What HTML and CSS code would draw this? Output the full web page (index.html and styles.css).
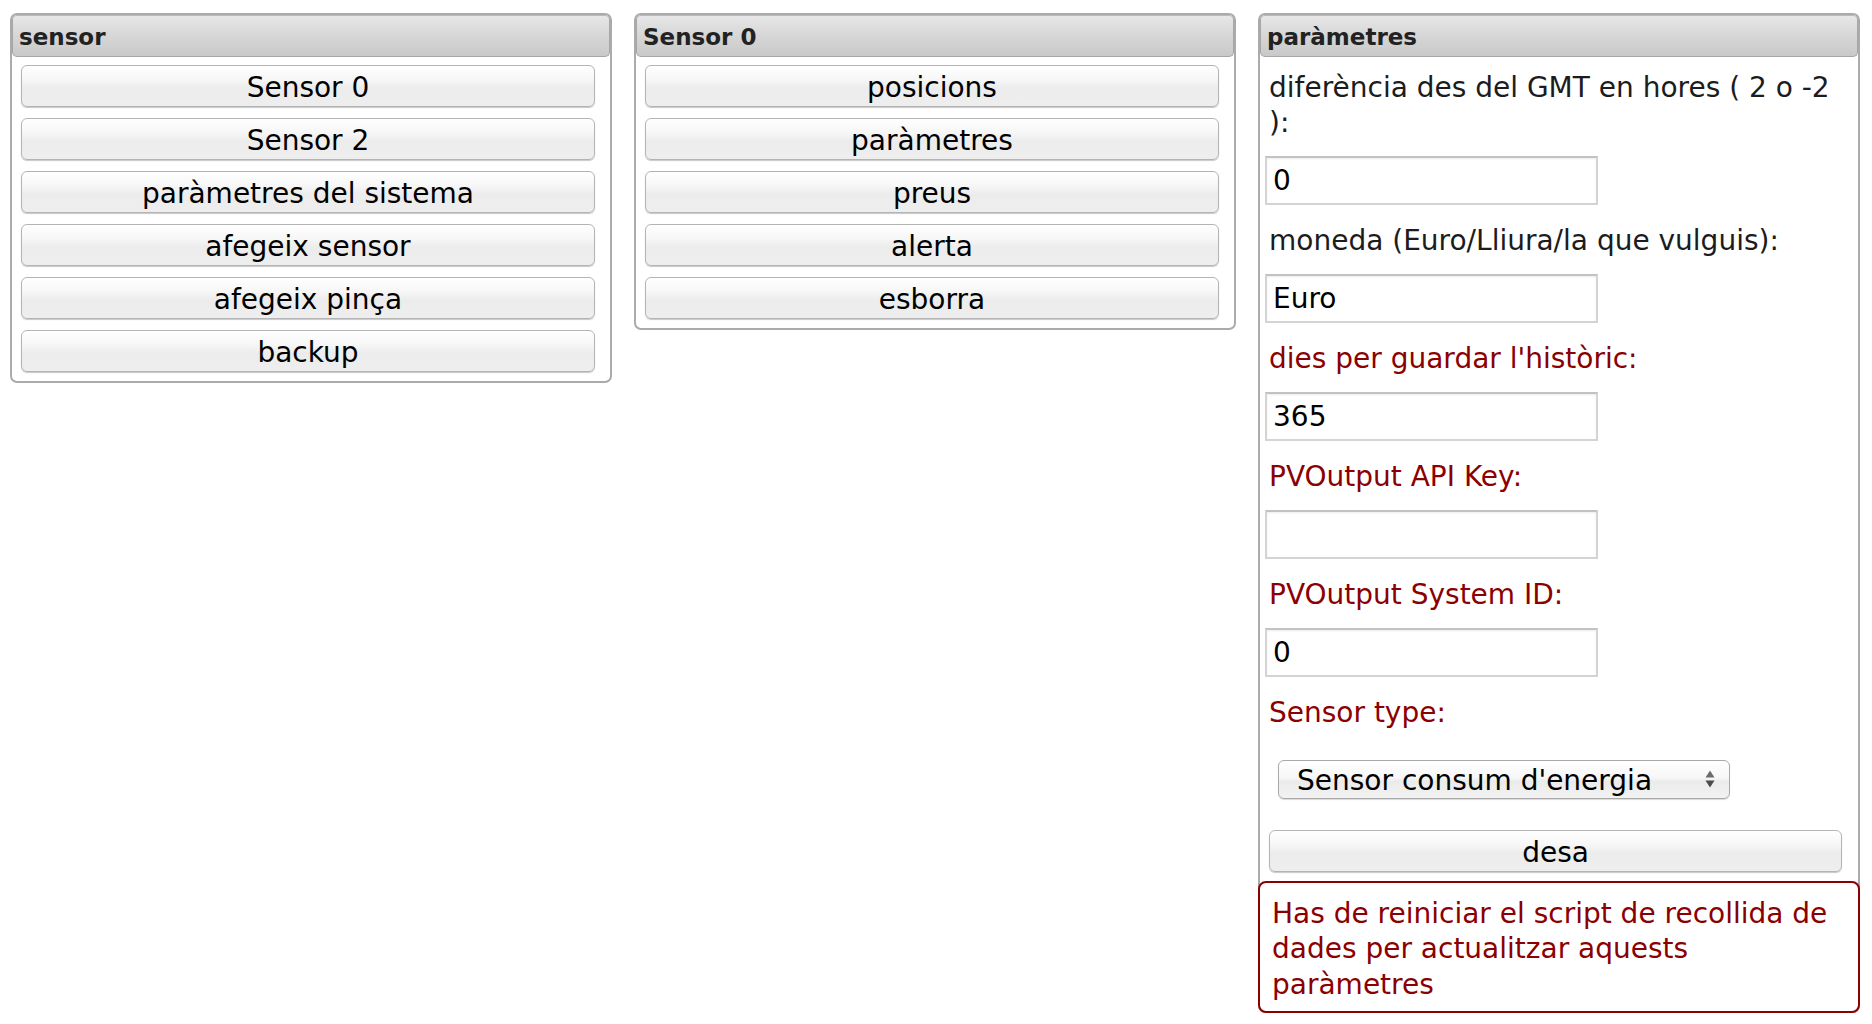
FILE: index.html
```html
<!DOCTYPE html>
<html lang="ca">
<head>
<meta charset="utf-8">
<title>sensor</title>
<link rel="stylesheet" href="styles.css">
</head>
<body>
<div class="columns">
  <section class="panel">
    <h3 class="panel-header">sensor</h3>
    <div class="button-list">
      <button class="btn">Sensor 0</button>
      <button class="btn">Sensor 2</button>
      <button class="btn">paràmetres del sistema</button>
      <button class="btn">afegeix sensor</button>
      <button class="btn">afegeix pinça</button>
      <button class="btn">backup</button>
    </div>
  </section>

  <section class="panel">
    <h3 class="panel-header">Sensor 0</h3>
    <div class="button-list">
      <button class="btn">posicions</button>
      <button class="btn">paràmetres</button>
      <button class="btn">preus</button>
      <button class="btn">alerta</button>
      <button class="btn">esborra</button>
    </div>
  </section>

  <section class="panel">
    <h3 class="panel-header">paràmetres</h3>
    <form class="form">
      <div class="label first">diferència des del GMT en hores ( 2 o -2 ):</div>
      <input class="field" type="text" value="0">
      <div class="label">moneda (Euro/Lliura/la que vulguis):</div>
      <input class="field" type="text" value="Euro">
      <div class="label warn">dies per guardar l'històric:</div>
      <input class="field" type="text" value="365">
      <div class="label warn">PVOutput API Key:</div>
      <input class="field" type="text" value="">
      <div class="label warn">PVOutput System ID:</div>
      <input class="field" type="text" value="0">
      <div class="label warn">Sensor type:</div>
      <div class="select-wrap">
        <select class="select">
          <option>Sensor consum d'energia</option>
        </select>
        <svg class="select-arrows" width="12" height="20" viewBox="0 0 12 20">
          <path d="M1.5 8.5 L6 1.5 L10.5 8.5 Z" fill="#6c6c6c"/>
          <path d="M1.5 11.5 L6 18.5 L10.5 11.5 Z" fill="#4c4c4c"/>
        </svg>
      </div>
      <button class="btn save" type="button">desa</button>
      <div class="alert">Has de reiniciar el script de recollida de dades per actualitzar aquests<br>paràmetres</div>
    </form>
  </section>
</div>
</body>
</html>
```

FILE: styles.css
```css
html, body {
  margin: 0;
  padding: 0;
  background: #ffffff;
}

body {
  font-family: "DejaVu Sans", Verdana, sans-serif;
  font-size: 28px;
  color: #1c1c1c;
}

.columns {
  display: grid;
  grid-template-columns: 602px 602px 602px;
  column-gap: 22px;
  align-items: start;
  padding: 13px 0 0 10px;
}

.panel {
  border: 2px solid #ababab;
  border-radius: 7px;
  background: #ffffff;
  box-sizing: border-box;
}

.panel-header {
  margin: 0;
  height: 42px;
  box-sizing: border-box;
  padding: 2px 0 0 6px;
  line-height: 38px;
  font-size: 23px;
  font-weight: bold;
  color: #222222;
  border: 1px solid #a6a6a6;
  border-top-color: #b9b9b9;
  border-radius: 5px;
  background: linear-gradient(to bottom, #e7e7e7 0%, #d6d6d6 50%, #c9c9c9 100%);
}

.button-list {
  display: flex;
  flex-direction: column;
  gap: 11px;
  padding: 8px 0 9px 9px;
}

.btn {
  display: block;
  width: 574px;
  height: 42px;
  box-sizing: border-box;
  margin: 0;
  padding: 4px 0 0 0;
  font-family: "DejaVu Sans", Verdana, sans-serif;
  font-size: 28px;
  line-height: 36px;
  color: #000000;
  text-align: center;
  border: 1px solid #b4b4b4;
  border-radius: 6px;
  background: linear-gradient(to bottom, #ffffff 0%, #f6f6f6 35%, #ececec 55%, #eeeeee 100%);
  box-shadow: 0 1px 1px rgba(0, 0, 0, 0.22);
}

.form {
  display: flex;
  flex-direction: column;
  align-items: flex-start;
  margin: 0;
}

.label {
  line-height: 35px;
  padding: 0 10px 0 9px;
  box-sizing: border-box;
  width: 100%;
  color: #1c1c1c;
}

.label.first {
  margin-top: 13px;
}

.label.warn {
  color: #8b0000;
}

.field {
  width: 333px;
  height: 49px;
  box-sizing: border-box;
  margin: 16px 0 18px 5px;
  padding: 0 6px;
  font-family: "DejaVu Sans", Verdana, sans-serif;
  font-size: 28px;
  color: #000000;
  border: 2px solid #d4d4d4;
  border-top-color: #c2c2c2;
  border-radius: 0;
  background: #ffffff;
  box-shadow: inset 0 1px 2px rgba(0, 0, 0, 0.08);
  outline: none;
}

.select-wrap {
  position: relative;
  margin: 30px 0 0 18px;
}

.select {
  -webkit-appearance: none;
  appearance: none;
  display: block;
  width: 452px;
  height: 39px;
  box-sizing: border-box;
  margin: 0;
  padding: 2px 0 0 18px;
  font-family: "DejaVu Sans", Verdana, sans-serif;
  font-size: 28px;
  line-height: 35px;
  color: #000000;
  border: 1px solid #a9a9a9;
  border-radius: 6px;
  background: linear-gradient(to bottom, #ffffff 0%, #f7f7f7 45%, #ebebeb 55%, #f2f2f2 100%);
  box-shadow: 0 1px 1px rgba(0, 0, 0, 0.15);
}

.select-arrows {
  position: absolute;
  right: 14px;
  top: 9px;
  pointer-events: none;
}

.btn.save {
  width: 573px;
  margin: 31px 0 0 9px;
}

.alert {
  align-self: stretch;
  margin: 9px -2px -2px -2px;
  padding: 13px 10px 9px 12px;
  line-height: 35.3px;
  color: #8b0000;
  background: #ffffff;
  border: 2px solid #8b0000;
  border-radius: 8px;
}
```
